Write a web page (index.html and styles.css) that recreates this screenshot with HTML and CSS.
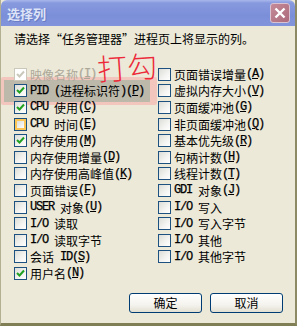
FILE: index.html
```html
<!DOCTYPE html>
<html lang="zh-CN">

<head>
    <meta charset="UTF-8">
    <title>选择列</title>
    <link rel="stylesheet" href="styles.css">
</head>

<body>
    <div class="window">
        <div class="titlebar">
            <span class="title">选择列</span>
            <span class="close-btn">
                <svg width="18" height="18" viewBox="0 0 18 18">
                    <path d="M4.5 4.5 L13.5 13.5 M13.5 4.5 L4.5 13.5" stroke="#fff" stroke-width="2.4" />
                </svg>
            </span>
        </div>

        <div class="content">
            <p class="intro">请选择“任务管理器”进程页上将显示的列。</p>

            <div class="cols">
                <!-- 手绘标注 -->
                <div class="mark"></div>
                <div class="note">打勾</div>

                <div class="col">
                    <label class="item disabled"><span class="cb"><svg width="11" height="11"><polyline points="2,5 4.5,7.5 9,2.5" class="tick" /></svg></span>映像名称<span class="en">(<u>I</u>)</span></label>
                    <label class="item"><span class="cb"><svg width="11" height="11"><polyline points="2,5 4.5,7.5 9,2.5" class="tick" /></svg></span><span class="en">PID (</span>进程标识符<span class="en">)(<u>P</u>)</span></label>
                    <label class="item"><span class="cb"><svg width="11" height="11"><polyline points="2,5 4.5,7.5 9,2.5" class="tick" /></svg></span><span class="en">CPU </span>使用<span class="en">(<u>C</u>)</span></label>
                    <label class="item"><span class="cb hover"></span><span class="en">CPU </span>时间<span class="en">(<u>E</u>)</span></label>
                    <label class="item"><span class="cb"><svg width="11" height="11"><polyline points="2,5 4.5,7.5 9,2.5" class="tick" /></svg></span>内存使用<span class="en">(<u>M</u>)</span></label>
                    <label class="item"><span class="cb"></span>内存使用增量<span class="en">(<u>D</u>)</span></label>
                    <label class="item"><span class="cb"></span>内存使用高峰值<span class="en">(<u>K</u>)</span></label>
                    <label class="item"><span class="cb"></span>页面错误<span class="en">(<u>F</u>)</span></label>
                    <label class="item"><span class="cb"></span><span class="en">USER </span>对象<span class="en">(<u>U</u>)</span></label>
                    <label class="item"><span class="cb"></span><span class="en">I/O </span>读取</label>
                    <label class="item"><span class="cb"></span><span class="en">I/O </span>读取字节</label>
                    <label class="item"><span class="cb"></span>会话<span class="en"> ID(<u>S</u>)</span></label>
                    <label class="item"><span class="cb"><svg width="11" height="11"><polyline points="2,5 4.5,7.5 9,2.5" class="tick" /></svg></span>用户名<span class="en">(<u>N</u>)</span></label>
                </div>

                <div class="col">
                    <label class="item"><span class="cb"></span>页面错误增量<span class="en">(<u>A</u>)</span></label>
                    <label class="item"><span class="cb"></span>虚拟内存大小<span class="en">(<u>V</u>)</span></label>
                    <label class="item"><span class="cb"></span>页面缓冲池<span class="en">(<u>G</u>)</span></label>
                    <label class="item"><span class="cb"></span>非页面缓冲池<span class="en">(<u>Q</u>)</span></label>
                    <label class="item"><span class="cb"></span>基本优先级<span class="en">(<u>R</u>)</span></label>
                    <label class="item"><span class="cb"></span>句柄计数<span class="en">(<u>H</u>)</span></label>
                    <label class="item"><span class="cb"></span>线程计数<span class="en">(<u>T</u>)</span></label>
                    <label class="item"><span class="cb"></span><span class="en">GDI </span>对象<span class="en">(<u>J</u>)</span></label>
                    <label class="item"><span class="cb"></span><span class="en">I/O </span>写入</label>
                    <label class="item"><span class="cb"></span><span class="en">I/O </span>写入字节</label>
                    <label class="item"><span class="cb"></span><span class="en">I/O </span>其他</label>
                    <label class="item"><span class="cb"></span><span class="en">I/O </span>其他字节</label>
                </div>
            </div>

            <div class="buttons">
                <button class="btn">确定</button>
                <button class="btn">取消</button>
            </div>
        </div>
    </div>
</body>

</html>
```

FILE: styles.css
```css
body {
    margin: 0;
    padding: 0;
    background-color: #ece9d8;
    font-family: "Noto Sans CJK SC", sans-serif;
    font-size: 12px;
    color: #000;
}

.window {
    box-sizing: border-box;
    width: 297px;
    height: 326px;
    background-color: #ece9d8;
    border-left: 1px solid #b3b092;
    border-right: 2px solid #8c8a64;
    border-bottom: 3px solid #807e55;
    display: flex;
    flex-direction: column;
}

.titlebar {
    height: 26px;
    flex-shrink: 0;
    display: flex;
    align-items: center;
    justify-content: space-between;
    padding: 0 5px 0 6px;
    background: linear-gradient(#a9b8ec 0, #8799de 3px, #7b8fd9 60%, #8294db 100%);
    border-radius: 6px 6px 0 0;
}

.title {
    font-weight: bold;
    font-size: 13px;
    color: #dde4f8;
    text-shadow: 1px 1px 0 #6a7cc4;
}

.close-btn {
    width: 20px;
    height: 20px;
    box-sizing: border-box;
    border: 1px solid #d9c3d2;
    border-radius: 3px;
    background: linear-gradient(135deg, #c48a98, #ad6b7c);
    display: flex;
}

.content {
    flex: 1;
    padding: 6px 0 0 13px;
}

.intro {
    margin: 0;
    line-height: 14px;
}

.cols {
    position: relative;
    display: grid;
    grid-template-columns: 144px 136px;
    margin-top: 20px;
}

.mark {
    position: absolute;
    left: -13px;
    top: 11px;
    width: 146px;
    height: 22px;
    background-color: #bcb9ab;
    border: 3px solid #f3c6bd;
    border-right-width: 7px;
    border-radius: 2px;
}

.note {
    position: absolute;
    left: 83px;
    top: -17px;
    font-weight: 300;
    font-size: 30px;
    line-height: 34px;
    color: #ec2a3a;
    transform: rotate(-4deg);
    z-index: 2;
}

.item {
    position: relative;
    height: 16.6px;
    display: flex;
    align-items: center;
    white-space: nowrap;
}

.item.disabled {
    color: #aca899;
}

.en {
    font-family: "Liberation Mono", monospace;
    font-size: 12px;
    letter-spacing: -1.2px;
    white-space: pre;
    -webkit-text-stroke: 0.25px currentColor;
}

.cb {
    box-sizing: border-box;
    width: 13px;
    height: 13px;
    margin-right: 3px;
    flex-shrink: 0;
    border: 1px solid #1c5180;
    background: linear-gradient(135deg, #dcdcd7 0%, #f4f4f2 60%, #ffffff 100%);
    display: flex;
}

.cb.hover {
    box-shadow: inset 0 0 0 2px #fbc656;
    background: linear-gradient(135deg, #fde6a8, #f9b73c);
}

.cb.hover::after {
    content: "";
    margin: 2px;
    flex: 1;
    background: linear-gradient(135deg, #dcdcd7, #ffffff);
}

.tick {
    fill: none;
    stroke: #21a121;
    stroke-width: 2;
}

.disabled .cb {
    border-color: #cac8bb;
    background: #ffffff;
}

.disabled .tick {
    stroke: #cac8bb;
}

.buttons {
    display: flex;
    justify-content: flex-end;
    gap: 8px;
    margin-top: 11px;
    padding-right: 12px;
}

.btn {
    width: 73px;
    height: 20px;
    padding: 0;
    border: 1px solid #003c74;
    border-radius: 3px;
    background: linear-gradient(#ffffff 0%, #f4f3ee 60%, #e3e0d2 100%);
    font-family: "Noto Sans CJK SC", sans-serif;
    font-size: 12px;
    color: #000;
}
```
